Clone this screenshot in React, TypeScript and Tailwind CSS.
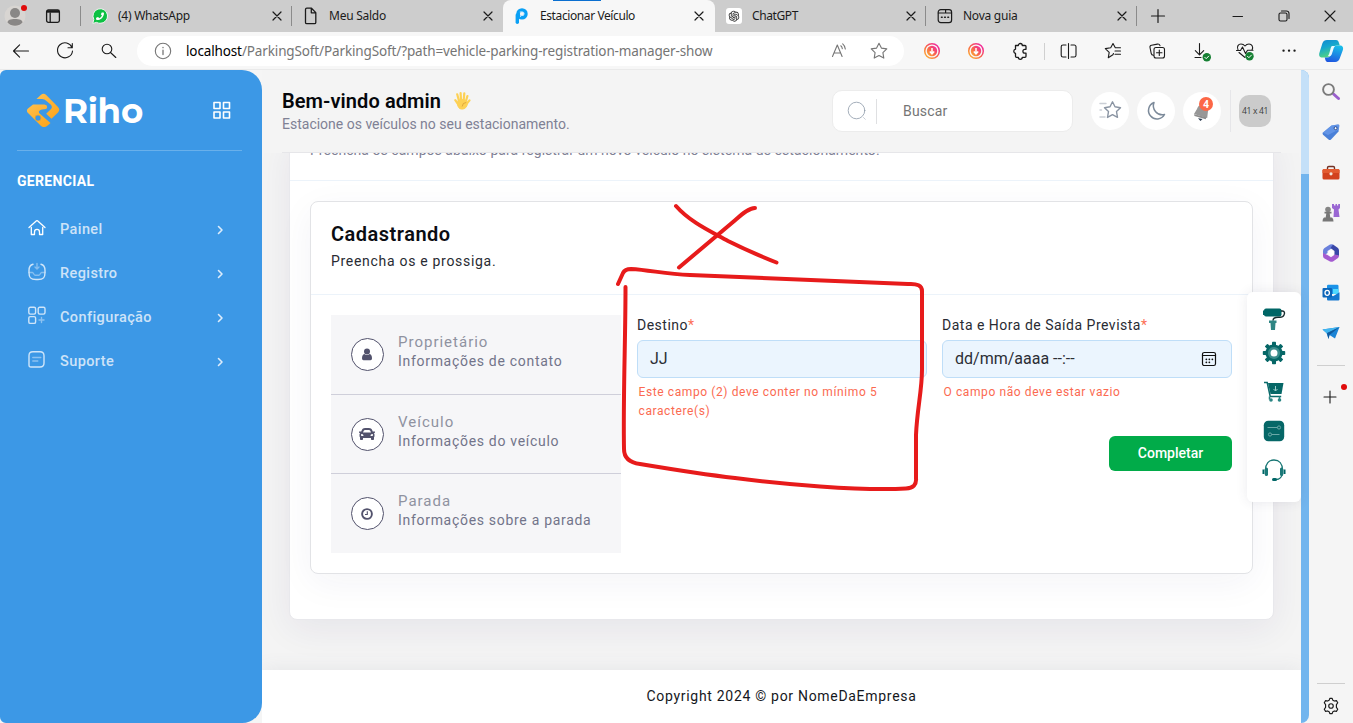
import React from "react";
import { FaPhoneAlt, FaCar } from "react-icons/fa";
import { AiOutlineOpenAI } from "react-icons/ai";

type IconProps = { children: React.ReactNode; size?: number; box?: number; stroke?: string; sw?: number; className?: string };

function Ico({ children, size = 20, box = 20, stroke = "#1b1b1b", sw = 1.1, className = "" }: IconProps) {
  return (
    <svg
      width={size}
      height={size}
      viewBox={`0 0 ${box} ${box}`}
      fill="none"
      stroke={stroke}
      strokeWidth={sw}
      strokeLinecap="round"
      strokeLinejoin="round"
      className={`shrink-0 ${className}`}
    >
      {children}
    </svg>
  );
}

const CloseX = () => (
  <Ico size={10} box={10} sw={1.2}>
    <path d="M1 1l8 8M9 1l-8 8" />
  </Ico>
);

const ParkingLogo = () => (
  <svg width="16" height="18" viewBox="0 0 16 18" fill="none">
    <path d="M3.300 15.200V8" stroke="#0aa0f5" strokeWidth="3.400" strokeLinecap="round" />
    <circle cx="8" cy="6.900" r="3.900" stroke="#0aa0f5" strokeWidth="3.600" />
    <path d="M5.800 5h2.600a1.500 1.500 0 010 3.400H6.600V10" stroke="#bfe6ff" strokeWidth="1" />
  </svg>
);

const DocIcon = () => (
  <Ico size={18} box={18} sw={1.3}>
    <path d="M3.500 2.500a1.300 1.300 0 011.3-1.300h4.700l4.300 4.400v9.800a1.300 1.300 0 01-1.300 1.300H4.800a1.300 1.300 0 01-1.300-1.300zM9.300 1.400v4.400h4.400" />
  </Ico>
);

const NewTabIcon = () => (
  <Ico size={16} box={16} sw={1.2}>
    <rect x="1.200" y="1.600" width="13.400" height="13" rx="2.600" />
    <path d="M1.400 5h7.200V2M8.600 5h5.800" />
    <path d="M4.500 9.200h.6M7.700 9.200h.6M10.900 9.200h.6" strokeWidth="1.600" />
  </Ico>
);

const WhatsIcon = () => (
  <svg width="16" height="16" viewBox="0 0 16 16" className="-ml-px overflow-visible">
    <path d="M.8 15.400l1-4A7.300 7.300 0 118 15.300a7 7 0 01-3.400-.9z" fill="#0dc143" stroke="#f3f3f3" strokeWidth="1" />
    <g transform="translate(12 4.200) scale(-1 1)">
      <FaPhoneAlt size={8} color="#fff" />
    </g>
  </svg>
);

const GptIcon = () => (
  <span className="flex size-4 items-center justify-center rounded-[3px] bg-white">
    <AiOutlineOpenAI size={14} color="#333" />
  </span>
);

type TabProps = { icon: React.ReactNode; title: string; active?: boolean; bar?: boolean; tracking?: string };

function Tab({ icon, title, active, bar, tracking = "tracking-[-0.25px]" }: TabProps) {
  return (
    <div
      className={`relative flex h-8 shrink-0 items-center pl-2.5 ${active ? "w-[212px] rounded-t-lg bg-[#f7f7f7]" : "w-[211px]"}`}
    >
      <span className="flex w-[18px] justify-center">{icon}</span>
      <span className={`ml-[9px] flex-1 text-[12px] text-[#1b1b1b] ${tracking}`}>{title}</span>
      <span className={active ? "mr-[11px]" : "mr-[10px]"}>
        <CloseX />
      </span>
      {bar && <span className="absolute top-[6px] right-0 h-5 w-px bg-[#8b8b8b]" />}
    </div>
  );
}

function TitleBar() {
  return (
    <div className="flex h-8 shrink-0 bg-[#cdcdcd]">
      <div className="flex w-[81px] shrink-0 items-center">
        <div className="relative ml-1 size-[22px]">
          <svg width="22" height="22" viewBox="0 0 22 22">
            <circle cx="11" cy="11" r="10.500" fill="#d8d5d2" />
            <circle cx="11" cy="8" r="5" fill="#898786" />
            <path d="M3.500 17.500c0-2.500 3-3.600 7.500-3.600s7.500 1.100 7.500 3.600a10.300 10.300 0 01-15 0z" fill="#898786" />
          </svg>
          <span className="absolute top-0 left-[17px] size-[6px] rounded-full bg-[#e00b0b]" />
        </div>
        <Ico size={16} box={16} sw={1.3} className="ml-[19px]">
          <rect x="1.600" y="2" width="12.800" height="12.400" rx="1.800" />
          <path d="M2 3.500h12" strokeWidth="2.400" strokeLinecap="butt" />
          <path d="M5.200 5v9" />
        </Ico>
        <span className="ml-auto h-5 w-px bg-[#8b8b8b]" />
      </div>
      <Tab icon={<WhatsIcon />} title="(4) WhatsApp" bar />
      <Tab icon={<DocIcon />} title="Meu Saldo" />
      <div className="relative flex w-[212px]">
        <Tab icon={<ParkingLogo />} title="Estacionar Veículo" active tracking="tracking-[-0.4px]" />
        <span className="absolute top-0 left-[50px] h-px w-[48px] bg-[#0a6fd0]" />
      </div>
      <Tab icon={<GptIcon />} title="ChatGPT" bar tracking="tracking-[-0.4px]" />
      <Tab icon={<NewTabIcon />} title="Nova guia" bar />
      <div className="ml-[13px] flex w-4 items-center">
        <Ico size={16} box={16} sw={1.2}>
          <path d="M8 1.500v13M1.500 8h13" />
        </Ico>
      </div>
      <div className="ml-auto flex items-center">
        <span className="flex w-[46px] justify-center">
          <Ico size={12} box={12}>
            <path d="M1 6.500h9.500" />
          </Ico>
        </span>
        <span className="flex w-[46px] justify-center">
          <Ico size={12} box={12}>
            <rect x="1" y="3" width="8" height="8" rx="1.500" />
            <path d="M3.500 1h5A2.500 2.500 0 0111 3.500v5" />
          </Ico>
        </span>
        <span className="flex w-[46px] justify-center">
          <Ico size={12} box={12}>
            <path d="M1 1l10 10M11 1L1 11" />
          </Ico>
        </span>
      </div>
    </div>
  );
}

const Slot = ({ children }: { children: React.ReactNode }) => (
  <span className="flex w-11 shrink-0 items-center justify-center">{children}</span>
);

const Downloader = ({ id }: { id: string }) => (
  <svg width="18" height="18" viewBox="0 0 18 18" fill="none">
    <defs>
      <linearGradient id={id} x1="0" y1="1" x2="1" y2="0">
        <stop offset="0" stopColor="#fdb82c" />
        <stop offset=".5" stopColor="#f8614f" />
        <stop offset="1" stopColor="#f01bb4" />
      </linearGradient>
    </defs>
    <circle cx="9" cy="9" r="7.300" stroke={`url(#${id})`} strokeWidth="1.500" />
    <circle cx="9" cy="9" r="5.200" fill={`url(#${id})`} />
    <path d="M9 6v5.500M6.800 9.500L9 11.800l2.200-2.300" stroke="#fff" strokeWidth="1.500" />
  </svg>
);

const CheckBadge = ({ x, y }: { x: number; y: number }) => (
  <>
    <circle cx={x} cy={y} r="4.200" fill="#168033" stroke="none" />
    <path d={`M${x - 2} ${y}l1.400 1.400 2.500-2.600`} stroke="#fff" strokeWidth="1" />
  </>
);

function ToolBar() {
  return (
    <div className="flex h-[38px] shrink-0 items-center border-b border-[#eaeaea] bg-[#f7f7f7]">
      <div className="flex w-[137px]">
        <span className="flex w-[43px] justify-center">
          <Ico className="-ml-[2px]">
            <path d="M17.500 10h-15M8.600 3.800L2.500 10l6.100 6.200" />
          </Ico>
        </span>
        <Slot>
          <Ico>
            <path d="M17 6.500A7.500 7.500 0 1017.500 10M17.300 2.500v4.300H13" />
          </Ico>
        </Slot>
        <Slot>
          <Ico>
            <circle cx="8" cy="8" r="4.800" />
            <path d="M11.500 11.500l5.300 5" />
          </Ico>
        </Slot>
      </div>
      <div className="flex h-[30px] w-[767px] items-center rounded-full bg-white pl-4">
        <Ico stroke="#767676" className="shrink-0">
          <circle cx="10" cy="10" r="7.700" />
          <path d="M10 9.200v4.300M10 6.300v.4" strokeWidth="1.300" />
        </Ico>
        <span className="ml-[13px] flex-1 pt-[2px] text-[13.5px] tracking-[-0.13px] whitespace-nowrap text-[#757575]">
          <span className="text-black">localhost</span>/ParkingSoft/ParkingSoft/?path=vehicle-parking-registration-manager-show
        </span>
        <span className="flex w-[39px] justify-center">
          <Ico stroke="#767676">
            <path d="M2.500 15.500L7.300 4l4.800 11.500M4 12h6.600M10.800 4.800c1 .8 1.400 1.700 1.500 2.800M12.700 2.800c1.800 1.500 2.500 3.200 2.600 5.200" />
          </Ico>
        </span>
        <span className="mr-[6px] flex w-[39px] justify-center">
          <Ico stroke="#767676">
            <path d="M10 2.200l2.400 4.900 5.400.8-3.900 3.800.9 5.400-4.800-2.600-4.800 2.600.9-5.400-3.900-3.800 5.400-.8z" />
          </Ico>
        </span>
      </div>
      <div className="ml-[6px] flex">
        <Slot><Downloader id="dl-a" /></Slot>
        <Slot><Downloader id="dl-b" /></Slot>
        <Slot>
          <Ico sw={1.3}>
            <path d="M5.500 4.500h2.800a2 2 0 014-.0h2.700a1 1 0 011 1v2.800h-1.200a1.900 1.900 0 000 3.800H16v3.200a1 1 0 01-1 1h-2.700a2 2 0 01-4 0H6.500a1 1 0 01-1-1v-2.800a2.200 2.200 0 010-4.300z" />
          </Ico>
        </Slot>
        <span className="mt-[1px] mr-1 ml-[2px] h-[17px] w-px self-center bg-[#d0d0d0]" />
        <span className="-ml-[2px] flex">
          <Slot>
            <Ico>
              <path d="M9.500 2.500v15M7 4H4A1.800 1.800 0 002.200 5.800v8.400A1.800 1.800 0 004 16h3M12 4h3.200A1.800 1.800 0 0117 5.800v8.400a1.800 1.800 0 01-1.800 1.800H12" />
            </Ico>
          </Slot>
          <Slot>
            <Ico>
              <path d="M10.500 12.500l-.6 1.300-4.600 2.900.9-5.400-3.900-3.700 5.400-.8L10 2.500l2.300 4.300h5.200M12 10h5.500M12 13.300h5.500" />
            </Ico>
          </Slot>
          <Slot>
            <Ico>
              <rect x="7" y="6.500" width="10.500" height="10.500" rx="2" />
              <path d="M12.300 9v5.500M9.500 11.800H15M6.500 14.200c-1.500.1-2.100-.8-2.300-1.800L3 6.500c-.2-1.100.4-2 1.500-2.200l5.900-1.200c1.300-.2 2.200.4 2.600 1.600" />
            </Ico>
          </Slot>
          <Slot>
            <Ico className="overflow-visible">
              <path d="M8.500 2.500v11.200M4.300 9.600l4.200 4.200 4.200-4.200M4 16.500h6" />
              <CheckBadge x={15.800} y={16.300} />
            </Ico>
          </Slot>
          <Slot>
            <Ico className="overflow-visible">
              <path d="M3 8.800C1.400 5.500 3.500 3 6 3c2 0 3.200 1 4 2 .8-1 2-2 4-2 2.700 0 4.700 2.800 3 6M1.500 9.500h4l2-3.500 3 6.500 2-3.300h5.500M4 11.500l6 5" />
              <CheckBadge x={14.500} y={15.300} />
            </Ico>
          </Slot>
          <Slot>
            <Ico>
              <path d="M4.500 9.700h.1M10 9.700h.1M15.500 9.700h.1" strokeWidth="2.300" />
            </Ico>
          </Slot>
        </span>
        <span className="flex w-[41px] justify-center">
          <svg width="26" height="24" viewBox="0 0 26 24" className="-ml-px">
            <defs>
              <linearGradient id="cp1" x1="0" y1="0" x2="0.400" y2="1">
                <stop offset="0" stopColor="#1386cf" />
                <stop offset=".45" stopColor="#15a6cf" />
                <stop offset="1" stopColor="#54d67d" />
              </linearGradient>
              <linearGradient id="cp2" x1="0.600" y1="0" x2="0.300" y2="1">
                <stop offset="0" stopColor="#19bde8" />
                <stop offset="1" stopColor="#1f57e0" />
              </linearGradient>
            </defs>
            <path d="M9 1h9c1.800 0 2.400 1.300 3 3l.8 2.500h-3c-2.200 0-3.200 1-3.900 3l-2 6c-.7 2-1.700 3-4 3H4.500c-3 0-4-2-3-5L4.500 4C5.300 2 6.700 1 9 1z" fill="url(#cp1)" />
            <path d="M17.500 6.500h4.200c3 0 4 2 3 5l-3 8c-.8 2.200-2.200 3.500-4.500 3.500H10c-1.800 0-2.500-1-3.200-4.500h2.400c2.200 0 3.200-1 3.900-3l1.400-4.500c.6-2.500 1-4.500 3-4.500z" fill="url(#cp2)" />
            <path d="M13.800 7h3.400c-1 .8-1.500 2-2 3.700l-1.100 3.500c-.6 2-1.200 2.800-3.300 3H9.500c1-.8 1.300-1.500 1.800-3l1-3.500c.4-1.600.8-2.700 1.500-3.700z" fill="#eaf9ff" />
          </svg>
        </span>
      </div>
    </div>
  );
}

type NavItem = { label: string; icon: React.ReactNode };

const nav: NavItem[] = [
  {
    label: "Painel",
    icon: (
      <Ico size={20} stroke="#fff" sw={1.3}>
        <path d="M2 9.500l7.500-6.700a.8.800 0 011 0L18 9.500M4.300 9.500v7h3.200v-2.600a2.500 2.500 0 015 0v2.600h3.200v-7" />
      </Ico>
    ),
  },
  {
    label: "Registro",
    icon: (
      <Ico size={20} stroke="#cfe5f9" sw={1.4}>
        <path d="M6 2.300C3 3 2 4.500 2 8.500v2c0 5 1.500 7 7 7h2c5.500 0 7-2 7-7v-2c0-4-1-5.500-4-6.200" />
        <path d="M10 1.500v5M8 5l2 2 2-2M2 10.500h3.500c1 0 1.300 2.700 2.500 2.700h4c1.200 0 1.500-2.700 2.500-2.700H18" opacity=".5" />
      </Ico>
    ),
  },
  {
    label: "Configuração",
    icon: (
      <Ico size={20} stroke="#cfe5f9" sw={1.4}>
        <rect x="1.800" y="1.300" width="6.800" height="6.800" rx="1.500" />
        <rect x="11.200" y="1.300" width="6.800" height="6.800" rx="1.500" />
        <rect x="1.800" y="10.600" width="6.800" height="6.800" rx="1.500" />
        <path d="M14.500 11.500v5M12 14h5" opacity=".55" />
      </Ico>
    ),
  },
  {
    label: "Suporte",
    icon: (
      <Ico size={20} stroke="#cfe5f9" sw={1.4}>
        <path d="M6 1.800h7c3 0 4 1.200 4 4V13c0 3-1 4-4 4H4c-1.500 0-2-.8-2-2V5.800c0-2.800 1-4 4-4z" />
        <path d="M5.800 7.500h8M5.800 11h5" opacity=".55" />
      </Ico>
    ),
  },
];

function SideNav() {
  return (
    <aside className="flex w-[262px] shrink-0 flex-col rounded-l-[6px] rounded-r-[20px] bg-[#3c98e6]">
      <div className="mr-5 ml-[17px] flex h-[81px] items-center border-b border-[#69b0eb]">
        <svg width="34" height="34" viewBox="0 0 34 34" className="ml-[9px]">
          <defs>
            <linearGradient id="riho" x1="0" y1="0" x2="1" y2="1">
              <stop offset="0" stopColor="#ffc04d" />
              <stop offset="1" stopColor="#fda41a" />
            </linearGradient>
          </defs>
          <path d="M10.500 6L14.800 2q2.700-2.300 5.400 0L32 14q2.500 2.800 0 5.500l-6.500 6.300-5.300-5 4.600-4.500q2.200-2.500-.2-4.900L20.500 8Q18.500 6 16 6z" fill="url(#riho)" />
          <path d="M7 11.500h11.500q2.700.2 2.700 2.500 0 2.200-2.700 2.300-4-.2-5.400 1.600-.8 1.400.7 2.900l10.700 9.200-2.500 2.300-1.800 1.200q-2.700 1.600-5.400-.7L2 20q-2.200-2.500 0-4.500z" fill="url(#riho)" />
          <circle cx="12" cy="25" r="3" fill="#3c98e6" stroke="#fda41a" strokeWidth=".7" />
        </svg>
        <span className="ml-[3px] pt-[2px] font-[Montserrat,Inter,sans-serif] text-[34px] leading-none font-bold tracking-[-0.3px] text-white">
          Riho
        </span>
        <Ico size={20} stroke="#fff" sw={1.6} className="mr-[10px] ml-auto">
          <rect x="2" y="2.500" width="6" height="6" />
          <rect x="11.500" y="2.500" width="6" height="6" />
          <rect x="2" y="12" width="6" height="6" />
          <rect x="11.500" y="12" width="6" height="6" />
        </Ico>
      </div>
      <h6 className="mt-[20px] ml-[17px] text-[14px] leading-5 font-bold tracking-[0.32px] text-white">GERENCIAL</h6>
      <ul className="mt-[17px]">
        {nav.map((n) => (
          <li key={n.label} className="flex h-11 items-center pl-[27px]">
            <span className="mb-[4px]">{n.icon}</span>
            <span className="ml-[13px] text-[14.5px] font-medium tracking-[0.4px] text-[#cde3f8]">{n.label}</span>
            <Ico size={10} box={10} stroke="#dcecfb" sw={1.6} className="mr-[37px] ml-auto">
              <path d="M3.500 1.500L7 5 3.500 8.500" />
            </Ico>
          </li>
        ))}
      </ul>
    </aside>
  );
}

const Round = ({ children }: { children: React.ReactNode }) => (
  <span className="relative mr-2 flex size-[38px] shrink-0 items-center justify-center rounded-full bg-white">{children}</span>
);

function PageHeader() {
  return (
    <header className="relative z-10 bg-[#f4f4f4] px-5">
      <div className="flex h-[83px] items-center border-b border-[#e6e6e9]">
        <div className="pt-[1px]">
          <div className="flex items-center">
            <h3 className="text-[20px] leading-6 font-semibold tracking-[0.08px] text-[#05070b]">Bem-vindo admin</h3>
            <svg width="18" height="20" viewBox="0 0 18 20" className="ml-3" fill="none" stroke="#fdd155" strokeWidth="2.200" strokeLinecap="round">
              <path d="M6 10L4.200 3.300M8 9l-.4-7M10.700 9l.6-6.600M13 10l1.400-5M13.500 13l3-3.600M5 13L2.300 9.200" />
              <path d="M5.300 9.500q4-2 8 0l1 3c0 3-2 5.600-5.200 5.600s-4.300-2.300-4.600-4.800z" fill="#fdd155" strokeWidth="1" />
              <path d="M12.800 11.500q-3.300 0-3.600 3.600" stroke="#d89d35" strokeWidth=".8" />
            </svg>
          </div>
          <p className="text-[14px] leading-[22px] text-[#7f8195]">Estacione os veículos no seu estacionamento.</p>
        </div>
        <div className="ml-auto flex items-center">
          <div className="mr-[18px] flex h-[42px] w-[241px] items-center rounded-[10px] border border-[#ececec] bg-white">
            <Ico size={20} stroke="#8d99a8" sw={0.8} className="ml-[14px]">
              <circle cx="9.500" cy="9.500" r="8.300" />
              <path d="M16.500 16.500l1.800 1.800" opacity=".6" />
            </Ico>
            <span className="ml-[9px] h-[25px] w-px bg-[#dfe0e2]" />
            <span className="ml-[26px] text-[14px] tracking-[0.2px] text-[#757575]">Buscar</span>
          </div>
          <Round>
            <Ico size={24} box={24} stroke="#8b95a3" sw={1.4}>
              <path d="M14.500 2.800l2.500 5 5.500.9-4 3.900 1 5.800-5-2.700-5 2.700 1-5.800-4-3.900 5.500-.9z" />
              <path d="M2 4.500h6M2 11h1.500M2 18h5" opacity=".45" />
            </Ico>
          </Round>
          <Round>
            <Ico size={24} box={24} stroke="#7c8a9a" sw={1.5} className="-ml-px">
              <path d="M10 3.500a8.500 8.500 0 1010.500 12A9 9 0 0110 3.500z" />
            </Ico>
          </Round>
          <Round>
            <svg width="24" height="24" viewBox="0 0 24 24" className="mt-[1px]">
              <path d="M7 9c1-4 4-5 7-4 3 1 4.500 3 4 6l-.8 7L4 14z" fill="#979797" />
              <path d="M4 14.200l12.500 3-.8 2L4.500 16z" fill="#8c8c8c" />
              <path d="M8 18.300l4.500.8-2 2z" fill="#25364b" />
            </svg>
            <span className="absolute top-[5px] left-4 flex size-[14px] items-center justify-center rounded-full bg-[#fc6746] font-['Open_Sans',sans-serif] text-[10px] font-bold text-white">
              4
            </span>
          </Round>
          <span className="mr-2 ml-px h-[42px] w-px bg-[#e6e6e9]" />
          <span className="mr-[10px] flex size-8 items-center justify-center rounded-[10px] bg-[#cbcbcb] font-['Open_Sans',sans-serif] text-[8.5px] font-medium tracking-[-0.3px] whitespace-nowrap text-[#3a3a3a]">
            41 x 41
          </span>
        </div>
      </div>
    </header>
  );
}

type Step = { title: string; text: string; icon: React.ReactNode };

const steps: Step[] = [
  {
    title: "Proprietário",
    text: "Informações de contato",
    icon: (
      <svg width="12" height="13" viewBox="0 0 12 13" fill="#52526c" className="-ml-px">
        <circle cx="6" cy="3.400" r="3" />
        <path d="M3.300 6q2.700 2 5.400 0Q11 6.500 11 10.500 11 12.300 9.500 12.300h-7Q1 12.300 1 10.500 1 6.500 3.300 6z" />
      </svg>
    ),
  },
  { title: "Veículo", text: "Informações do veículo", icon: <FaCar size={16} color="#52526c" className="-ml-px" /> },
  {
    title: "Parada",
    text: "Informações sobre a parada",
    icon: (
      <svg width="12" height="12" viewBox="0 0 12 12" fill="none" stroke="#52526c" className="-ml-px">
        <circle cx="6" cy="6" r="4.900" strokeWidth="1.900" />
        <path d="M6.300 3.300v3.200H4" strokeWidth="1.100" />
      </svg>
    ),
  },
];

function Steps() {
  return (
    <ol className="flex h-[238px] w-[290px] shrink-0 flex-col bg-[#f6f6f8]">
      {steps.map((s, i) => (
        <li
          key={s.title}
          className={`flex items-center pl-5 ${i === 0 ? "h-[79px]" : i === 1 ? "h-[79px] border-t border-[#cfcfda]" : "h-[80px] border-t border-[#cfcfda]"}`}
        >
          <span className="flex size-[33px] shrink-0 items-center justify-center rounded-full border border-[#52526c] bg-white">
            {s.icon}
          </span>
          <div className="ml-[14px] pb-[5px]">
            <p className="text-[15px] leading-[19px] tracking-[1px] text-[#8f92a0]">{s.title}</p>
            <p className="text-[14px] leading-[19px] tracking-[0.7px] text-[#72748a]">{s.text}</p>
          </div>
        </li>
      ))}
    </ol>
  );
}

function Field({ label, value, error, calendar }: { label: string; value: string; error: string; calendar?: boolean }) {
  return (
    <div className="w-[290px]">
      <label className="block text-[14px] leading-5 tracking-[0.5px] text-[#292b33]">
        {label}
        <span className="text-[#fc6f55]">*</span>
      </label>
      <div className="mt-[5px] flex h-[38px] items-center rounded-[6px] border border-[#bfdef8] bg-[#ebf5fe] px-3 text-[16px] text-[#2b2e35]">
        <span className="flex-1">{value}</span>
        {calendar && (
          <Ico size={16} box={16} stroke="#111" sw={1.2} className="mr-[2px]">
            <rect x="1.500" y="1.500" width="13" height="13" rx="1.800" />
            <path d="M1.500 4.500h13" />
            <path d="M5.300 8.300h.1M8.300 8.300h.1M11.300 8.300h.1M5.300 11.300h.1M8.300 11.300h.1" strokeWidth="1.700" />
          </Ico>
        )}
      </div>
      <p className="mt-[5px] w-[270px] pl-[1.500px] text-[12px] leading-[19px] tracking-[0.6px] text-[#fb6a51]">{error}</p>
    </div>
  );
}

function RegistrationCard() {
  return (
    <section className="mx-[27px] -mt-[18px] flex h-[485px] flex-col rounded-[8px] border border-[#e8e8ec] bg-white shadow-[0_9px_36px_rgba(46,35,94,0.07)]">
      <div className="h-[45px] border-b border-[#ecf3fa] px-5 pt-[4px]">
        <p className="text-[14px] leading-5 tracking-[0.04px] text-[#7f8195]">
          Preencha os campos abaixo para registrar um novo veículo no sistema de estacionamento.
        </p>
      </div>
      <div className="mx-5 mt-5 h-[373px] rounded-[8px] border border-[#e2e3e6] bg-white shadow-[0_9px_36px_rgba(46,35,94,0.05)]">
        <div className="h-[93px] border-b border-[#ecf3fa] px-5 pt-[20px]">
          <h5 className="text-[20px] leading-6 font-semibold tracking-[0.5px] text-[#0b0d12]">Cadastrando</h5>
          <p className="mt-[5px] text-[14px] leading-5 tracking-[0.7px] text-[#292b33]">Preencha os e prossiga.</p>
        </div>
        <div className="flex px-5 pt-5">
          <Steps />
          <div className="ml-4 flex-1">
            <div className="flex gap-[15px]">
              <Field label="Destino" value="JJ" error="Este campo (2) deve conter no mínimo 5 caractere(s)" />
              <Field label="Data e Hora de Saída Prevista" value="dd/mm/aaaa --:--" error="O campo não deve estar vazio" calendar />
            </div>
            <button className="mt-[15px] ml-auto flex h-[35px] w-[123px] items-center justify-center rounded-[6px] bg-[#01ab49] text-[14px] font-medium text-white">
              Completar
            </button>
          </div>
        </div>
      </div>
    </section>
  );
}

function FloatingTools() {
  return (
    <div className="absolute top-[222px] left-[1247px] z-20 flex h-[210px] w-[54px] flex-col items-center rounded-[6px] bg-white pt-[15px] shadow-[0_0_12px_rgba(60,60,90,0.10)]">
      <svg width="24" height="24" viewBox="0 0 24 24" fill="none">
        <rect x="2" y="1.500" width="17.500" height="8" rx="2" fill="#066" />
        <path d="M19 4h1.500c2 0 2.500 2 1.500 4-.8 1.800-2 2.300-4 2.300h-2c-3 0-5 .8-5 3.500" stroke="#182c2e" strokeWidth="1.400" />
        <path d="M1 3.500h2v4.500H1z" fill="#066" />
        <path d="M7 13.500h7.500V16h-1L13 23H9l-.5-7H7z" fill="#2f8583" />
      </svg>
      <svg width="24" height="24" viewBox="0 0 24 24" className="mt-[10px]">
        <g fill="#066767">
          {[0, 45, 90, 135].map((a) => (
            <rect key={a} x="10" y="0.800" width="4" height="22.400" rx=".8" transform={`rotate(${a} 12 12)`} />
          ))}
          <circle cx="12" cy="12" r="8.600" />
        </g>
        <circle cx="12" cy="12" r="4.800" fill="#fff" stroke="#3c8d8c" strokeWidth="2.600" />
      </svg>
      <svg width="24" height="24" viewBox="0 0 24 24" className="mt-[15px]" fill="none">
        <path d="M6 3h15.500l-2 11H8.500z" fill="#066767" />
        <path d="M2 2.500h3.200l3 14h11" stroke="#0b6b6b" strokeWidth="1.500" />
        <path d="M7.500 16.500v3M17.500 16.500v3" stroke="#2a8583" strokeWidth="1.500" />
        <circle cx="9" cy="20" r="1.800" fill="#2a8583" />
        <circle cx="17.500" cy="20" r="1.800" fill="#2a8583" />
        <path d="M13.500 6v4.800M11.500 9l2 2 2-2" stroke="#9fd0cc" strokeWidth="1" />
      </svg>
      <svg width="24" height="24" viewBox="0 0 24 24" className="mt-[15px]" fill="none">
        <rect x="1.800" y="1.800" width="20.400" height="20.400" rx="4.500" fill="#066767" />
        <path d="M5.500 8.500h10M9.500 15.500h8" stroke="#6ba9a8" strokeWidth="1.200" />
        <circle cx="17" cy="8.500" r="1.600" stroke="#6ba9a8" />
        <circle cx="8" cy="15.500" r="1.600" stroke="#6ba9a8" />
      </svg>
      <svg width="24" height="24" viewBox="0 0 24 24" className="mt-[15px]" fill="none">
        <path d="M3.500 12C3.500 5.500 6.800 2 12 2s8.500 3.500 8.500 10M20.300 15.500c-.5 4-3 6-6.300 6" stroke="#167573" strokeWidth="1.300" />
        <rect x="2.800" y="9.500" width="3.200" height="8.500" rx="1.600" fill="#1a7978" />
        <rect x="18" y="9.500" width="3.200" height="8.500" rx="1.600" fill="#1a7978" />
        <path d="M1.500 11.500v4.500M22.500 11.500v4.500" stroke="#066" strokeWidth="2" />
        <rect x="10" y="20" width="5" height="3" rx="1.500" fill="#066" />
      </svg>
    </div>
  );
}

function Scribble() {
  return (
    <svg
      className="pointer-events-none absolute top-[125px] left-[600px] z-30"
      width="340"
      height="305"
      viewBox="600 195 340 305"
      fill="none"
      stroke="#e71b1b"
      strokeWidth="4"
      strokeLinecap="round"
      strokeLinejoin="round"
    >
      <path d="M676 206C690 222 710 231 728 241C744 249 760 256 776.500 262.500" />
      <path d="M755 208C748 208 740 216 733 222L679 267.500" />
      <path d="M618 284L623 273Q625 269 631 269C650 270 665 274 690 275L908 284Q922 283 922 291V370C922 390 917 410 916 435V478Q917 488 906 488.500C860 491 780 484 735 478C700 474 670 469 640 464Q624 462 624 449C623 400 625.500 340 625.500 287" />
    </svg>
  );
}

function EdgeRail() {
  return (
    <div className="flex w-11 shrink-0 flex-col items-center bg-[#f5f5f5] pt-3">
      <div className="flex flex-col gap-5">
        <svg width="20" height="20" viewBox="0 0 20 20" fill="none">
          <path d="M12.500 12l5 4.500" stroke="#9a5fcd" strokeWidth="3" strokeLinecap="round" />
          <circle cx="7.500" cy="7.500" r="5.400" stroke="#7b7b7b" strokeWidth="1.900" />
        </svg>
        <svg width="20" height="20" viewBox="0 0 20 20">
          <path d="M10.500 3.500L17 2.500q1.300 0 1.300 1.300L17.500 9.500 10 17.500q-1.200 1-2.500 0L2 12.800q-1-1.200 0-2.300z" fill="#4a80d8" />
          <path d="M2 10.500l8.500-7 6.500-1q1.300 0 1.300 1.300l-.5 3.700L7 13z" fill="#6c9cec" opacity=".7" />
          <circle cx="14.600" cy="6.200" r="1.500" fill="#fff" stroke="#274b91" />
        </svg>
        <svg width="20" height="20" viewBox="0 0 20 20" className="mt-px -mb-px">
          <path d="M6.500 7V4.800q0-1.300 1.300-1.300h4.400q1.300 0 1.300 1.300V7" fill="none" stroke="#733124" strokeWidth="1.400" />
          <rect x="1.500" y="6" width="17" height="10.500" rx="1.500" fill="#d2421e" />
          <path d="M1.500 10V7.500Q1.500 6 3 6h14q1.500 0 1.500 1.500V10z" fill="#e35b30" />
          <circle cx="10" cy="10.800" r="1.600" fill="#f2e8dc" />
        </svg>
        <svg width="20" height="20" viewBox="0 0 20 20" className="mt-px -mb-px">
          <path d="M11 1h2v1.500h1.500V1H16v1.500h1.200V1H19v4l-1.500 1.500L18.500 14h-6l.5-7.500L11 5z" fill="#9a67d3" />
          <circle cx="7" cy="6.500" r="2.800" fill="#858585" />
          <path d="M3.500 8.800h7v1.800H8.700l.6 4H11q1.500 1 1.500 3.900h-11q0-3 1.500-3.900h1.700l.6-4H3.500z" fill="#777" />
        </svg>
        <svg width="20" height="20" viewBox="0 0 20 20" className="mt-px -mb-px">
          <path d="M9 1.500L3.500 5Q2 6 2 8v5l4.500-3V8L12 4.500V1.500Q10.500.8 9 1.500z" fill="#6a80dc" />
          <path d="M12 1.500L17 5q1 1 1 2.500V13l-4.500-1V8L9.500 5z" fill="#3947a8" />
          <path d="M2 10v3q0 1.500 1.500 2.500L9 18.500q1.500.7 3 0l5-3.500q1-1 1-2.500l-4-1-4 2.800L6.500 12z" fill="#a45bd0" />
          <circle cx="10" cy="10" r="2.800" fill="#fff" />
        </svg>
        <svg width="20" height="20" viewBox="0 0 20 20" className="mt-px -mb-px">
          <path d="M6 3q0-1.200 1.200-1.200h9Q17.500 1.800 17.500 3v8H6z" fill="#1b93e8" />
          <path d="M12 6h5.500v5H12z" fill="#50d9ff" />
          <path d="M6 9.500l6 3.800 6.500-4v7q0 1.200-1.200 1.200H7Q6 17.500 6 16.300z" fill="#1679d0" />
          <rect x="1.500" y="5" width="9.500" height="9.500" rx="1" fill="#0d65b8" />
          <ellipse cx="6.200" cy="9.800" rx="2.200" ry="2.500" fill="none" stroke="#fff" strokeWidth="1.300" />
        </svg>
        <svg width="20" height="20" viewBox="0 0 20 20" className="mt-px -mb-px">
          <path d="M1.500 6.500L18.500 4 14 15.500 8.500 12l-1 4-2-6z" fill="#1b84d6" />
          <path d="M1.500 6.500L18.500 4 6 10.500z" fill="#42b6f0" />
          <path d="M7.500 16l1-4L18.500 4 6 10z" fill="#105b9f" />
        </svg>
      </div>
      <span className="mt-[23px] h-px w-7 shrink-0 bg-[#cfcfcf]" />
      <div className="relative mt-6 mr-[2px]">
        <Ico size={14} box={14}>
          <path d="M7 1v12M1 7h12" />
        </Ico>
        <span className="absolute -top-[6px] left-[18px] size-[6px] rounded-full bg-[#e00b0b]" />
      </div>
      <span className="mt-auto h-px w-7 shrink-0 bg-[#cfcfcf]" />
      <Ico size={18} box={20} sw={1.300} className="mt-[13px] mb-2">
        <path d="M8 3.500L8.700 1.500h2.600l.7 2 1.800 1 2.200-.5 1.500 2.400L16 8.500v3l1.500 2.100L16 16l-2.200-.5-1.800 1-.7 2H8.700l-.7-2-1.800-1L4 16l-1.500-2.400L4 11.500v-3L2.500 6.400 4 4l2.200.5z" />
        <circle cx="10" cy="10" r="2.500" />
      </Ico>
    </div>
  );
}

export default function App() {
  return (
    <div className="flex h-[723px] w-[1353px] flex-col overflow-hidden bg-[#f5f5f5] font-['Noto_Sans',sans-serif]">
      <TitleBar />
      <ToolBar />
      <div className="relative flex min-h-0 flex-1 font-[Roboto,sans-serif]">
        <SideNav />
        <main className="flex w-[1039px] shrink-0 flex-col overflow-hidden bg-[#f4f4f4]">
          <PageHeader />
          <RegistrationCard />
          <footer className="z-10 mt-auto flex h-[53px] shrink-0 items-center justify-center bg-white text-[14px] tracking-[0.7px] text-[#15171c] shadow-[0_0_20px_rgba(89,102,122,0.10)]">
            Copyright 2024 © por NomeDaEmpresa
          </footer>
        </main>
        <div className="w-2 shrink-0 overflow-hidden rounded-r-[8px] bg-[#72b5ee]">
          <div className="h-[104px] bg-[#c4e0f8]" />
        </div>
        <EdgeRail />
        <FloatingTools />
        <Scribble />
      </div>
    </div>
  );
}
